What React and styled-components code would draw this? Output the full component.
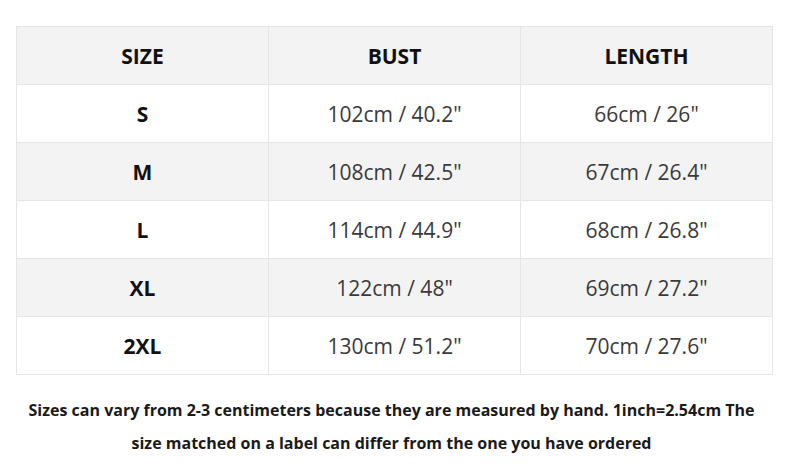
import React from "react";
import styled, { createGlobalStyle } from "styled-components";

const GlobalStyle = createGlobalStyle`
  html, body {
    margin: 0;
    padding: 0;
    background: #ffffff;
  }
  body {
    font-family: "Open Sans", "Noto Sans", sans-serif;
  }
`;

const Page = styled.div`
  width: 794px;
  height: 468px;
  padding: 26px 21px 0 16px;
  box-sizing: border-box;
  background: #fff;
`;

const Table = styled.table`
  width: 757px;
  border-collapse: collapse;
  table-layout: fixed;
`;

const Row = styled.tr`
  height: 58px;
  background: ${(props) => (props.$shaded ? "#f3f3f3" : "#ffffff")};
`;

const HeadCell = styled.th`
  border: 1px solid #e6e6e6;
  padding: 0;
  font-size: 21px;
  font-weight: 700;
  color: #111;
  text-align: center;
  vertical-align: middle;
`;

const Cell = styled.td`
  border: 1px solid #e6e6e6;
  padding: 0;
  font-size: 21px;
  font-weight: ${(props) => (props.$bold ? 700 : 400)};
  color: ${(props) => (props.$bold ? "#111" : "#3a3a3a")};
  text-align: center;
  vertical-align: middle;
`;

const Note = styled.p`
  margin: 19px 0 0;
  padding: 0 6px 0 0;
  font-size: 16px;
  font-weight: 700;
  line-height: 33px;
  color: #1a1a1a;
  text-align: center;
  white-space: nowrap;
`;

const rows = [
  { size: "S", bust: '102cm / 40.2"', length: '66cm / 26"' },
  { size: "M", bust: '108cm / 42.5"', length: '67cm / 26.4"' },
  { size: "L", bust: '114cm / 44.9"', length: '68cm / 26.8"' },
  { size: "XL", bust: '122cm / 48"', length: '69cm / 27.2"' },
  { size: "2XL", bust: '130cm / 51.2"', length: '70cm / 27.6"' },
];

export default function App() {
  return (
    <>
      <GlobalStyle />
      <Page>
        <Table>
          <thead>
            <Row $shaded>
              <HeadCell>SIZE</HeadCell>
              <HeadCell>BUST</HeadCell>
              <HeadCell>LENGTH</HeadCell>
            </Row>
          </thead>
          <tbody>
            {rows.map((r, i) => (
              <Row key={r.size} $shaded={i % 2 === 1}>
                <Cell $bold>{r.size}</Cell>
                <Cell>{r.bust}</Cell>
                <Cell>{r.length}</Cell>
              </Row>
            ))}
          </tbody>
        </Table>
        <Note>
          Sizes can vary from 2-3 centimeters because they are measured by hand. 1inch=2.54cm The
          <br />
          size matched on a label can differ from the one you have ordered
        </Note>
      </Page>
    </>
  );
}
